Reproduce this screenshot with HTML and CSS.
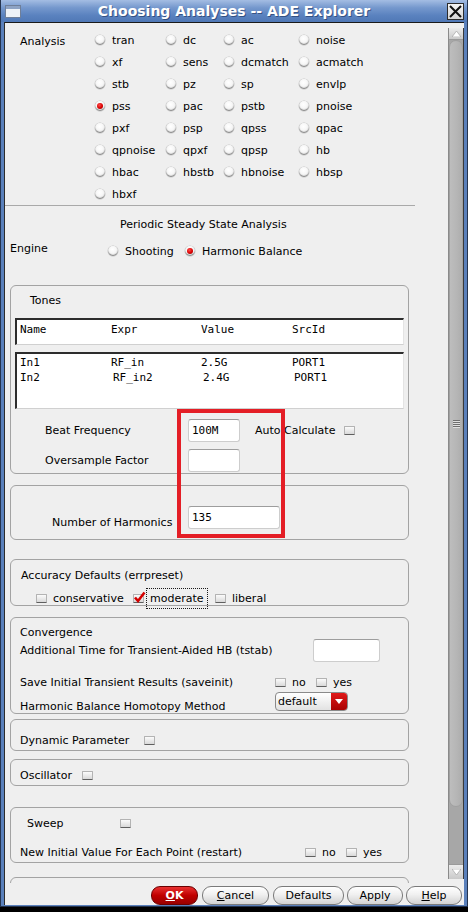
FILE: index.html
```html
<!DOCTYPE html>
<html>
<head>
<meta charset="utf-8">
<title>Choosing Analyses -- ADE Explorer</title>
<link rel="stylesheet" href="styles.css">
</head>
<body>
<div class="window">
  <div class="titlebar">
    <svg class="win-icon" width="16" height="13" viewBox="0 0 16 13">
      <rect x="0.5" y="0.5" width="15" height="12" fill="#eef2f7" stroke="#6f7f99"/>
      <rect x="1" y="1" width="14" height="3" fill="#8ea3c4"/>
    </svg>
    <div class="title">Choosing Analyses -- ADE Explorer</div>
    <div class="close">
      <svg width="15" height="15" viewBox="0 0 15 15">
        <path d="M2 2 L13 13 M13 2 L2 13" stroke="#111" stroke-width="2" fill="none"/>
      </svg>
    </div>
  </div>
  <div class="frame">
    <div class="main">
      <div class="content">
        <div class="analysis">
          <div class="analysis-label">Analysis</div>
          <div class="analysis-grid">
            <div class="opt"><span class="radio"></span>tran</div>
            <div class="opt"><span class="radio"></span>dc</div>
            <div class="opt"><span class="radio"></span>ac</div>
            <div class="opt"><span class="radio"></span>noise</div>
            <div class="opt"><span class="radio"></span>xf</div>
            <div class="opt"><span class="radio"></span>sens</div>
            <div class="opt"><span class="radio"></span>dcmatch</div>
            <div class="opt"><span class="radio"></span>acmatch</div>
            <div class="opt"><span class="radio"></span>stb</div>
            <div class="opt"><span class="radio"></span>pz</div>
            <div class="opt"><span class="radio"></span>sp</div>
            <div class="opt"><span class="radio"></span>envlp</div>
            <div class="opt"><span class="radio on"></span>pss</div>
            <div class="opt"><span class="radio"></span>pac</div>
            <div class="opt"><span class="radio"></span>pstb</div>
            <div class="opt"><span class="radio"></span>pnoise</div>
            <div class="opt"><span class="radio"></span>pxf</div>
            <div class="opt"><span class="radio"></span>psp</div>
            <div class="opt"><span class="radio"></span>qpss</div>
            <div class="opt"><span class="radio"></span>qpac</div>
            <div class="opt"><span class="radio"></span>qpnoise</div>
            <div class="opt"><span class="radio"></span>qpxf</div>
            <div class="opt"><span class="radio"></span>qpsp</div>
            <div class="opt"><span class="radio"></span>hb</div>
            <div class="opt"><span class="radio"></span>hbac</div>
            <div class="opt"><span class="radio"></span>hbstb</div>
            <div class="opt"><span class="radio"></span>hbnoise</div>
            <div class="opt"><span class="radio"></span>hbsp</div>
            <div class="opt"><span class="radio"></span>hbxf</div>
          </div>
        </div>
        <div class="separator"></div>
        <div class="pss-title">Periodic Steady State Analysis</div>
        <div class="engine-row">
          <div class="engine-label">Engine</div>
          <div class="opt eng-shoot"><span class="radio"></span>Shooting</div>
          <div class="opt"><span class="radio on"></span>Harmonic Balance</div>
        </div>

        <div class="group tones">
          <div class="group-title tones-title">Tones</div>
          <div class="tbl tbl-head">
            <span>Name</span><span>Expr</span><span>Value</span><span>SrcId</span>
          </div>
          <div class="tbl tbl-body">
            <span>In1</span><span>RF_in</span><span>2.5G</span><span>PORT1</span>
            <span>In2</span><span class="nudge2">RF_in2</span><span class="nudge2">2.4G</span><span class="nudge2">PORT1</span>
          </div>
          <div class="field-row first">
            <div class="field-label">Beat Frequency</div>
            <div class="input w52">100M</div>
            <div class="auto-label">Auto Calculate</div>
            <span class="cb"></span>
          </div>
          <div class="field-row second">
            <div class="field-label">Oversample Factor</div>
            <div class="input w52"></div>
          </div>
        </div>

        <div class="group harmonics">
          <div class="field-row harm-row">
            <div class="field-label harm-label">Number of Harmonics</div>
            <div class="input w92">135</div>
          </div>
        </div>

        <div class="group accuracy">
          <div class="group-title acc-title">Accuracy Defaults (errpreset)</div>
          <div class="check-row acc-row">
            <div class="copt w97"><span class="cb"></span>conservative</div>
            <div class="copt w82"><span class="cb checked"><svg width="13" height="13" viewBox="0 0 13 13"><path d="M2 6.5 L5 10 L11.5 1.5" stroke="#d40000" stroke-width="2.6" fill="none" stroke-linejoin="miter"/></svg></span><span class="focus">moderate</span></div>
            <div class="copt"><span class="cb"></span>liberal</div>
          </div>
        </div>

        <div class="group convergence">
          <div class="group-title conv-title">Convergence</div>
          <div class="conv-row tstab-row">
            <div class="conv-label">Additional Time for Transient-Aided HB (tstab)</div>
            <div class="input w67"></div>
          </div>
          <div class="conv-row save-row">
            <div class="save-label">Save Initial Transient Results (saveinit)</div>
            <div class="copt w41"><span class="cb"></span>no</div>
            <div class="copt"><span class="cb"></span>yes</div>
          </div>
          <div class="conv-row homo-row">
            <div class="save-label homo-label">Harmonic Balance Homotopy Method</div>
            <div class="dropdown">
              <span class="dd-text">default</span>
              <span class="dd-arrow"><svg width="8" height="5" viewBox="0 0 8 5"><path d="M0 0 H8 L4 5 Z" fill="#fff"/></svg></span>
            </div>
          </div>
        </div>

        <div class="group dynamic">
          <div class="single-row">
            <div class="dyn-label">Dynamic Parameter</div>
            <span class="cb"></span>
          </div>
        </div>

        <div class="group oscillator">
          <div class="single-row">
            <div class="osc-label">Oscillator</div>
            <span class="cb"></span>
          </div>
        </div>

        <div class="group sweep">
          <div class="single-row">
            <div class="sweep-label">Sweep</div>
            <span class="cb"></span>
          </div>
          <div class="single-row restart-row">
            <div class="restart-label">New Initial Value For Each Point (restart)</div>
            <div class="copt w41"><span class="cb"></span>no</div>
            <div class="copt"><span class="cb"></span>yes</div>
          </div>
        </div>

        <div class="group last"></div>

        <div class="highlight"></div>
      </div>
      <div class="scrollbar">
        <div class="sb-btn">
          <svg width="9" height="6" viewBox="0 0 9 6"><path d="M0 6 L4.5 0 L9 6 Z" fill="#fff" stroke="#9a9a9a" stroke-width="0.6"/></svg>
        </div>
        <div class="sb-track">
          <div class="sb-thumb">
            <div class="grip"><i></i><i></i><i></i><i></i></div>
          </div>
        </div>
        <div class="sb-btn down">
          <svg width="9" height="6" viewBox="0 0 9 6"><path d="M0 0 L4.5 6 L9 0 Z" fill="#fff" stroke="#9a9a9a" stroke-width="0.6"/></svg>
        </div>
      </div>
    </div>
    <div class="buttonbar">
      <div class="btn ok w47"><u>O</u>K</div>
      <div class="btn w67 g4"><u>C</u>ancel</div>
      <div class="btn w71 g4">Defaults</div>
      <div class="btn w56 g3">Apply</div>
      <div class="btn w56 g3"><u>H</u>elp</div>
    </div>
  </div>
</div>
</body>
</html>
```
FILE: styles.css
```css
* { box-sizing: border-box; }
html, body { margin: 0; padding: 0; background: #000; }
body {
  width: 468px;
  height: 912px;
  overflow: hidden;
  font-family: "DejaVu Sans", "Noto Sans", sans-serif;
  font-size: 11px;
  color: #000;
}

.window {
  width: 468px;
  height: 907px;
  background: #5a80bb;
  border-left: 1px solid #25344f;
  border-right: 1px solid #25344f;
  border-bottom: 1px solid #25344f;
  padding-bottom: 1px;
  display: flex;
  flex-direction: column;
}

/* title bar */
.titlebar {
  height: 22px;
  flex: none;
  display: flex;
  align-items: center;
  background: linear-gradient(#a4bde3 0%, #7598cd 35%, #5a82bf 70%, #5078b6 100%);
}
.win-icon { margin-left: 4px; flex: none; }
.title {
  flex: 1;
  text-align: center;
  color: #fff;
  font-weight: bold;
  font-size: 14px;
  line-height: 16px;
  text-shadow: 1px 1px 0 rgba(20, 40, 80, 0.55);
}
.close {
  width: 17px;
  height: 17px;
  margin-right: 3px;
  flex: none;
  border: 1px solid #2b2b2b;
  background: linear-gradient(#f4f4f4, #d6d6d6);
  display: flex;
  align-items: center;
  justify-content: center;
}

/* frame */
.frame {
  flex: 1;
  margin: 0 3px;
  background: #efefef;
  border-left: 1px solid #2c2c2c;
  display: flex;
  flex-direction: column;
}
.main {
  height: 861px;
  flex: none;
  border-top: 1px solid #1a1a1a;
  display: flex;
}
.content {
  position: relative;
  flex: 1;
  overflow: hidden;
}

/* analysis grid */
.analysis { display: flex; padding-top: 6px; }
.analysis-label {
  width: 90px;
  padding: 6px 0 0 15px;
  line-height: 13px;
}
.analysis-grid {
  display: grid;
  grid-template-columns: 71px 58px 75px 100px;
  grid-auto-rows: 22px;
}
.opt {
  display: flex;
  align-items: center;
  gap: 7px;
  white-space: nowrap;
  line-height: 13px;
}
.radio {
  position: relative;
  width: 10px;
  height: 10px;
  flex: none;
  border-radius: 50%;
  background: radial-gradient(circle at 45% 35%, #ffffff 0%, #f6f6f6 45%, #d2d2d2 100%);
  box-shadow: inset 0 -1px 1px #858585, 0 0 0 0.5px #c4c4c4;
}
.radio.on::after {
  content: "";
  position: absolute;
  left: 2px;
  top: 2px;
  width: 6px;
  height: 6px;
  border-radius: 50%;
  background: radial-gradient(circle at 40% 35%, #ff4a4a 0%, #d80000 55%, #8a0000 100%);
}

.separator {
  width: 410px;
  height: 1px;
  background: #a9a9a9;
}
.pss-title {
  margin-top: 12px;
  padding-left: 115px;
  line-height: 13px;
}
.engine-row {
  margin-top: 13px;
  height: 14px;
  display: flex;
  align-items: center;
}
.engine-label {
  width: 103px;
  padding-left: 5px;
  align-self: flex-start;
  line-height: 13px;
  margin-top: -2px;
}
.eng-shoot { width: 77px; }

/* group boxes */
.group {
  margin-left: 5px;
  width: 399px;
  border: 1px solid #a3a3a3;
  border-radius: 6px;
}
.group-title { line-height: 13px; }

.tones { margin-top: 27px; padding-bottom: 1px; }
.tones-title { padding: 8px 0 0 19px; }
.tbl {
  margin-left: 4px;
  width: 389px;
  background: #fff;
  border-top: 2px solid #2d2d2d;
  border-left: 2px solid #2d2d2d;
  border-right: 1px solid #e4e4e4;
  border-bottom: 1px solid #d0d0d0;
  display: grid;
  grid-template-columns: 91px 90px 91px auto;
  grid-auto-rows: 15px;
  font-family: "DejaVu Sans Mono", "Liberation Mono", monospace;
  font-size: 11px;
  line-height: 15px;
}
.tbl-head { margin-top: 11px; height: 27px; padding: 2px 0 0 3px; }
.tbl-body { margin-top: 7px; height: 57px; padding: 1px 0 0 3px; }
.nudge2 { padding-left: 2px; }

.field-row {
  display: flex;
  align-items: center;
  height: 23px;
}
.field-row.first { margin-top: 10px; }
.field-row.second { margin-top: 7px; }
.field-label {
  width: 177px;
  padding-left: 34px;
  line-height: 13px;
  white-space: nowrap;
}
.input {
  height: 23px;
  background: #fff;
  border: 1px solid #cdcdcd;
  border-top-color: #9d9d9d;
  border-radius: 3px;
  padding-left: 3px;
  display: flex;
  align-items: center;
  font-family: "DejaVu Sans Mono", "Liberation Mono", monospace;
  font-size: 11px;
}
.w52 { width: 52px; }
.w92 { width: 92px; }
.w67 { width: 67px; }
.auto-label {
  width: 89px;
  margin-left: 15px;
  line-height: 13px;
  white-space: nowrap;
}

.harmonics { margin-top: 11px; padding: 20px 0 10px 0; }
.harm-row { align-items: flex-end; }
.harm-label { padding-left: 41px; }

/* checkboxes */
.cb {
  position: relative;
  width: 11px;
  height: 9px;
  flex: none;
  background: linear-gradient(#fbfbfb, #d9d9d9);
  border: 1px solid #b3b3b3;
  border-bottom: 1px solid #5f5f5f;
  border-radius: 1px;
}
.cb.checked svg {
  position: absolute;
  left: -1px;
  top: -4px;
}
.copt {
  display: flex;
  align-items: center;
  gap: 6px;
  white-space: nowrap;
  line-height: 13px;
}
.w97 { width: 97px; }
.w82 { width: 82px; }
.w41 { width: 41px; }
.focus {
  outline: 1px dotted #1a1a1a;
  outline-offset: 3px;
}

.accuracy { margin-top: 19px; }
.acc-title { padding: 9px 0 0 10px; }
.check-row {
  display: flex;
  align-items: center;
  height: 14px;
}
.acc-row { margin-top: 9px; padding-left: 25px; }

.convergence { margin-top: 11px; padding-bottom: 2px; }
.conv-title { padding: 8px 0 0 9px; }
.conv-row { display: flex; align-items: center; }
.tstab-row { height: 23px; }
.conv-label {
  width: 302px;
  padding-left: 9px;
  line-height: 13px;
  white-space: nowrap;
}
.save-row { margin-top: 13px; height: 14px; }
.save-label {
  width: 264px;
  padding-left: 9px;
  line-height: 13px;
  white-space: nowrap;
}
.homo-row { margin-top: 3px; height: 19px; }
.homo-label { align-self: flex-end; margin-bottom: -2px; }
.dropdown {
  width: 73px;
  height: 19px;
  display: flex;
  border: 1px solid #8a8a8a;
  border-radius: 4px;
  overflow: hidden;
  background: linear-gradient(#ffffff, #e2e2e2);
}
.dd-text {
  flex: 1;
  padding-left: 2px;
  line-height: 17px;
}
.dd-arrow {
  width: 16px;
  background: linear-gradient(#e01818, #a80000);
  display: flex;
  align-items: center;
  justify-content: center;
}

.single-row {
  display: flex;
  align-items: center;
  height: 14px;
}
.dynamic { margin-top: 5px; padding: 13px 0 3px 0; }
.dyn-label { width: 133px; padding-left: 9px; line-height: 13px; white-space: nowrap; }
.oscillator { margin-top: 8px; padding: 8px 0 3px 0; }
.osc-label { width: 71px; padding-left: 9px; line-height: 13px; }
.sweep { margin-top: 21px; padding: 8px 0 3px 0; }
.sweep-label { width: 109px; padding-left: 16px; line-height: 13px; }
.restart-row { margin-top: 15px; }
.restart-label { width: 294px; padding-left: 9px; line-height: 13px; white-space: nowrap; }
.last { margin-top: 14px; height: 30px; }

/* red highlight overlay */
.highlight {
  position: absolute;
  left: 172px;
  top: 386px;
  width: 108px;
  height: 129px;
  border: 4px solid #e41e26;
}

/* scrollbar */
.scrollbar {
  width: 16px;
  flex: none;
  margin: 5px 0 4px 0;
  display: flex;
  flex-direction: column;
  border-left: 1px solid #8a8a8a;
  border-right: 1px solid #3a3a3a;
  background: #a7a7a7;
}
.sb-btn {
  height: 12px;
  flex: none;
  background: linear-gradient(#ececec, #c9c9c9);
  border-bottom: 1px solid #9a9a9a;
  display: flex;
  align-items: center;
  justify-content: center;
}
.sb-btn.down {
  height: 15px;
  border-bottom: none;
  border-top: 1px solid #9a9a9a;
}
.sb-track { flex: 1; display: flex; flex-direction: column; }
.sb-thumb {
  height: 767px;
  background: linear-gradient(90deg, #bdbdbd, #b5b5b5 60%, #adadad);
  border: 1px solid #a0a0a0;
  border-radius: 7px;
  display: flex;
  align-items: center;
  justify-content: center;
}
.grip { display: flex; flex-direction: column; gap: 1px; }
.grip i {
  display: block;
  width: 7px;
  height: 1px;
  background: #6f6f6f;
  box-shadow: 0 1px 0 #e0e0e0;
}

/* buttons */
.buttonbar {
  flex: 1;
  display: flex;
  justify-content: flex-end;
  align-items: flex-start;
  padding: 3px 2px 0 0;
}
.btn {
  height: 19px;
  border: 1px solid #7a7a7a;
  border-radius: 9px;
  background: linear-gradient(#ffffff, #f0f0f0 45%, #d2d2d2);
  display: flex;
  align-items: center;
  justify-content: center;
  line-height: 15px;
  white-space: nowrap;
}
.btn u { text-decoration: underline; }
.btn.ok {
  background: linear-gradient(#e83030, #c00000 50%, #980000);
  border-color: #6a0000;
  color: #fff;
  font-weight: bold;
}
.w47 { width: 47px; }
.w67 { width: 67px; }
.w71 { width: 71px; }
.w56 { width: 56px; }
.g4 { margin-left: 4px; }
.g3 { margin-left: 3px; }
```
